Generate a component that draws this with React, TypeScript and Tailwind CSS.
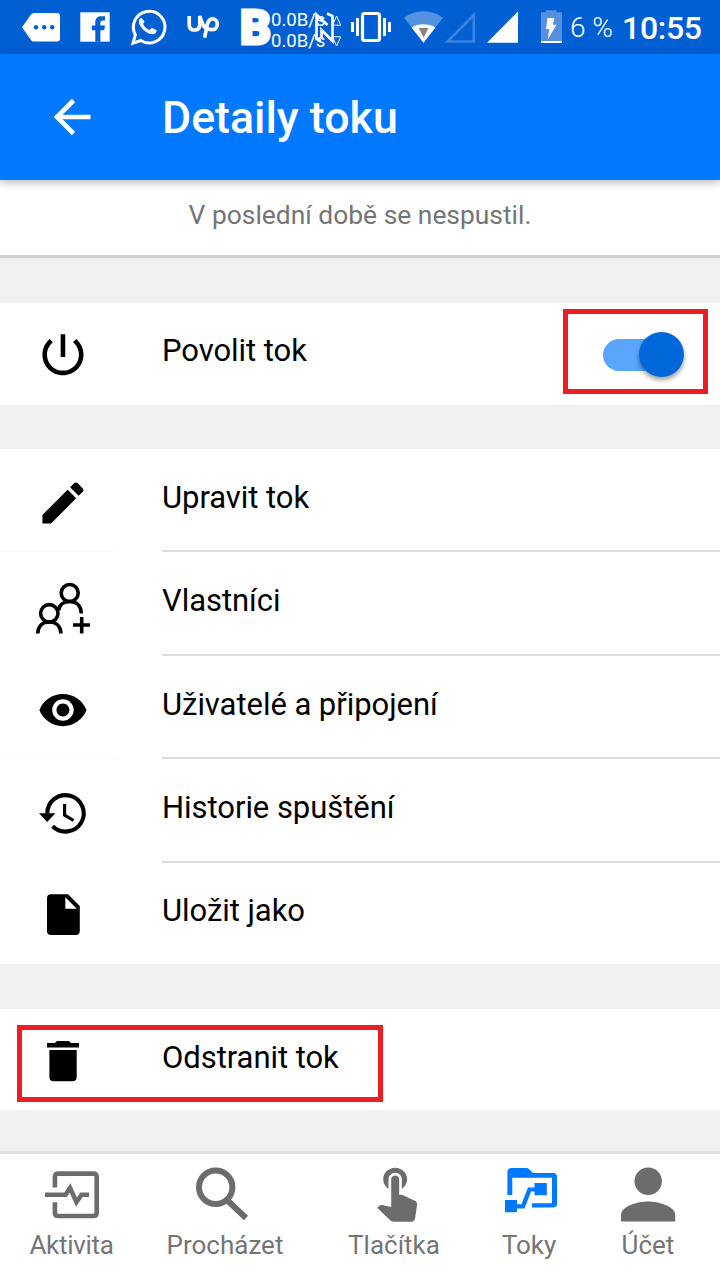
import type { ReactNode } from 'react';

const font = "font-['Roboto','Noto_Sans',sans-serif]";

function StatusIcon({ x, w, children }: { x: number; w: number; children: ReactNode }) {
  return (
    <svg width={w} height={54} viewBox={`${x} 0 ${w} 54`} className="block shrink-0 overflow-visible" fill="#fff">
      {children}
    </svg>
  );
}

function StatusBar() {
  return (
    <div className="flex h-[54px] shrink-0 items-start bg-[#005fd3] text-white">
      <StatusIcon x={0} w={70}>
        <path d="M22 27.2 31 14.5Q32 13 34 13H57Q60 13 60 16V38.5Q60 41.5 57 41.5H34Q32 41.5 31 40Z" />
        <circle cx="36" cy="27.2" r="2.2" fill="#005fd3" />
        <circle cx="44.2" cy="27.2" r="2.2" fill="#005fd3" />
        <circle cx="52.2" cy="27.2" r="2.2" fill="#005fd3" />
      </StatusIcon>
      <StatusIcon x={70} w={50}>
        <path d="M80.3 12.3H109.7V41.7H80.3Z" />
        <path d="M95.3 41.8V30.2H91.8V25.6H95.3V22C95.3 18 97.8 16.2 101.4 16.2H105V20.6H103C101.2 20.6 100.4 21.4 100.4 23V25.6H105L104.3 30.2H100.4V41.8Z" fill="#005fd3" />
      </StatusIcon>
      <StatusIcon x={120} w={57}>
        <path d="M134.2 43.6 136.6 35.2A15.8 15.8 0 1 1 142 40.9Z" transform="translate(-1.2 -.4)" fill="none" stroke="#fff" strokeWidth="3" strokeLinejoin="miter" />
        <path transform="translate(-1.4 0)" d="M143.3 18.3C142.5 17.6 141.6 18 140.9 19.2C139 22 141.5 26.5 145 30C148.8 33.4 153.3 35.4 156 33.8C157.8 32.8 158.3 31.3 158 30.3L153.3 27.8L151 30.1C148 29 145.8 26.7 144.5 24L146 21.8Z" />
      </StatusIcon>
      <StatusIcon x={177} w={53}>
        <path d="M189.2 16V24.5Q189.2 30 194.4 30Q199.8 30 199.8 24.5V16C201.2 21.5 203 25.8 206 28.5M204.6 37.6 207.2 25Q208.4 18.8 212.6 18.8A4.7 5.4 0 0 1 212.6 29.6Q209.5 29.6 206 28.5" fill="none" stroke="#fff" strokeWidth="3.7" />
      </StatusIcon>
      <div className="flex h-[54px] w-[114px] shrink-0">
        <span className="ml-[10px] w-[31px] text-[48px] font-black leading-[56px] [-webkit-text-stroke:3px_#fff]">B</span>
        <span className="w-[54px] whitespace-nowrap pt-[10px] text-[18.5px] leading-[21px]">0.0B/s<br />0.0B/s</span>
        <span className="w-[19px]">
          <svg width="40" height="54" viewBox="313 0 40 54" className="-ml-[12px] block overflow-visible" fill="none" stroke="#fff">
            <path transform="translate(1.5 0)" d="M319.5 40.5 315 39V14.5L326 25M325.5 13.5 331 16V41L320 30V38" strokeWidth="2.6" />
            <path d="M332.5 25.2 336.6 16 340.7 25.2ZM332.5 36.8 336.6 46 340.7 36.8Z" strokeWidth="1" />
          </svg>
        </span>
      </div>
      <StatusIcon x={344} w={54}>
        <rect x="362.5" y="13.5" width="17" height="27" rx="2" fill="none" stroke="#fff" strokeWidth="3.2" />
        <path d="M351 22H354V32H351ZM356 18H359V36H356ZM383 18H386V36H383ZM388 22H391V32H388Z" />
      </StatusIcon>
      <StatusIcon x={398} w={46}>
        <path d="M404 17.8Q412 11.2 423.5 11.2T443 17.8L423.5 42.7Z" opacity=".32" />
        <path d="M411.6 27.5Q417 24.2 423.5 24.2T435.4 27.5L423.5 42.7Z" />
        <path d="M418.8 28H428.4L423.6 37.8Z" fill="#858585" />
      </StatusIcon>
      <StatusIcon x={444} w={40}>
        <path d="M447.5 41.5H473.8V15Z" fill="none" stroke="#3a83de" strokeWidth="2.6" />
      </StatusIcon>
      <StatusIcon x={484} w={45}>
        <path d="M487 42.8H518V11.5Z" />
      </StatusIcon>
      <StatusIcon x={529} w={40}>
        <path d="M546 10.2H556.5V12.3H562V41H541V12.3H546Z" fill="#568fe0" />
        <path d="M541 41H562V43H541ZM547.5 18H554.5L552.8 24.7H556.5L547.8 39.5L549.2 29H546Z" />
      </StatusIcon>
      <span className="w-[53px] shrink-0 whitespace-nowrap pl-[1px] text-[28px] font-light leading-[56px]">6 %</span>
      <span className="shrink-0 whitespace-nowrap text-[32px] font-medium leading-[56px] tracking-[-0.3px]">10:55</span>
    </div>
  );
}

function RowIcon({ y, h, children }: { y: number; h: number; children: ReactNode }) {
  return (
    <svg width={162} height={h} viewBox={`0 ${y} 162 ${h}`} className="block shrink-0" fill="#000">
      {children}
    </svg>
  );
}

function Row({ y, h, label, icon, divider, faint, pad = 'pt-[31px]' }: { y: number; h: number; label: string; icon: ReactNode; divider?: boolean; faint?: boolean; pad?: string }) {
  return (
    <div className="flex bg-white" style={{ height: h }}>
      <RowIcon y={y} h={h}>
        {icon}
        {faint && <path d={`M0 ${y + h - 0.5}H117`} stroke="#fafafa" />}
      </RowIcon>
      <div className={divider ? 'flex-1 border-b-2 border-[#dcdcdc]' : 'flex-1'}>
        <div className={`whitespace-nowrap text-[31px] leading-[36px] tracking-[-0.05px] text-black ${pad}`}>{label}</div>
      </div>
    </div>
  );
}

function Tab({ className, label, x, w, children }: { className: string; label: string; x: number; w: number; children: ReactNode }) {
  return (
    <div className={`flex shrink-0 flex-col items-center ${className}`}>
      <svg width={w} height={72} viewBox={`${x} 1154 ${w} 72`} className="block" fill="#6c6c6c">
        {children}
      </svg>
      <span className="whitespace-nowrap text-[26px] leading-[38px] text-[#757575]">{label}</span>
    </div>
  );
}

export default function App() {
  return (
    <div className={`relative flex h-[1280px] w-[720px] flex-col overflow-hidden bg-[#f0f0f0] ${font}`}>
      <StatusBar />
      <header className="z-10 flex h-[126px] shrink-0 items-center bg-[#0078ff] text-white shadow-[0_2px_9px_rgba(0,0,0,0.3)]">
        <svg width="162" height="126" viewBox="0 54 162 126" fill="none" stroke="#fff" strokeWidth="4.6">
          <path d="M90.5 117H57M73.5 100.5 57 117 73.5 133.5" />
        </svg>
        <h1 className="pt-[2px] text-[44.7px] font-medium leading-[60px]">Detaily toku</h1>
      </header>
      <div className="h-[78px] shrink-0 border-b-[3px] border-[#cfcfd2] bg-white pt-[18px] text-center text-[26.4px] leading-[34px] text-[#757575]">
        V poslední době se nespustil.
      </div>
      <div className="h-[45px] shrink-0" />
      <div className="relative shrink-0">
        <Row y={303} h={102} label="Povolit tok" pad="pt-[30px]" icon={
          <path transform="translate(35.6 327.3) scale(2.28)" d="M13 3h-2v10h2V3zm4.83 2.17-1.42 1.42C17.99 7.86 19 9.81 19 12c0 3.87-3.13 7-7 7s-7-3.13-7-7c0-2.19 1.01-4.14 2.58-5.42L6.17 5.17C4.23 6.82 3 9.26 3 12c0 4.97 4.03 9 9 9s9-4.03 9-9c0-2.74-1.23-5.18-3.17-6.83z" />
        } />
        <div className="absolute left-[603px] top-[36px] h-[32px] w-[78px] rounded-full bg-[#5aa6ff]" />
        <div className="absolute left-[639px] top-[29px] size-[45px] rounded-full bg-[#0067db] shadow-[0_3px_5px_rgba(0,0,0,0.4)]" />
        <div className="absolute left-[563px] top-[6px] h-[85px] w-[145px] border-[5px] border-[#ee1c25]" />
      </div>
      <div className="h-[44px] shrink-0" />
      <div className="shrink-0">
        <Row y={449} h={103} label="Upravit tok" divider faint icon={
          <path transform="translate(35.6 475.6) scale(2.28)" d="M3 17.25V21h3.75L17.81 9.94l-3.75-3.75L3 17.25zM20.71 7.04c.39-.39.39-1.02 0-1.41l-2.34-2.34c-.39-.39-1.02-.39-1.41 0l-1.83 1.83 3.75 3.75 1.83-1.83z" />
        } />
        <Row y={552} h={104} label="Vlastníci" divider icon={
          <g fill="none" stroke="#000" strokeWidth="3.6">
            <circle cx="69.7" cy="593" r="8.5" />
            <circle cx="49.3" cy="613.3" r="8.7" />
            <path d="M37.7 633.5C38 625.5 43 622 49.3 622S60.6 625.5 61 633.5M58.5 610.5C59.5 604 64 601.5 69.7 601.5C76.5 601.5 81 605.5 81.3 613.5M73 625H90M81.7 617V633.5" />
          </g>
        } />
        <Row y={656} h={103} label="Uživatelé a připojení" divider faint icon={
          <path transform="translate(37.2 684.3) scale(2.145)" d="M12 4.5C7 4.5 2.73 7.61 1 12c1.73 4.39 6 7.5 11 7.5s9.27-3.11 11-7.5c-1.73-4.39-6-7.5-11-7.5zM12 17c-2.76 0-5-2.24-5-5s2.24-5 5-5 5 2.24 5 5-2.24 5-5 5zm0-8c-1.66 0-3 1.34-3 3s1.34 3 3 3 3-1.34 3-3-1.34-3-3-3z" />
        } />
        <Row y={759} h={104} label="Historie spuštění" divider icon={
          <g fill="none" stroke="#000" strokeWidth="4.1">
            <path d="M47.3 813.5A18.2 18.2 0 1 1 52.6 826.2" />
            <path d="M64.6 804V815.2L73.5 820.5" strokeWidth="3.2" />
            <path d="M39 813.2H55.4L47.2 822Z" fill="#000" stroke="none" />
          </g>
        } />
        <Row y={863} h={101} label="Uložit jako" pad="pt-[30px]" icon={
          <path fillRule="evenodd" d="M51 894.3H68L79.8 906V931Q79.8 935 75.8 935H51Q47 935 47 931V898.3Q47 894.3 51 894.3ZM65.3 897.2V908.7H76.8Z" />
        } />
      </div>
      <div className="h-[45px] shrink-0" />
      <div className="relative shrink-0">
        <Row y={1009} h={101} label="Odstranit tok" icon={
          <path d="M47 1043H54.8L57 1041H69L71 1043H79V1047.5H47ZM49.4 1050H76.7V1077Q76.7 1081.2 72.5 1081.2H53.6Q49.4 1081.2 49.4 1077Z" />
        } />
        <div className="absolute left-[17px] top-[16px] h-[77px] w-[366px] border-[5px] border-[#ee1c25]" />
      </div>
      <div className="h-[41px] shrink-0" />
      <nav className="flex h-[129px] shrink-0 border-t-[3px] border-[#e0e0e0] bg-white">
        <Tab className="w-[143px] tracking-[-0.3px]" label="Aktivita" x={36} w={71}>
          <path d="M54.9 1187.5V1177Q54.9 1173.6 58.3 1173.6H93.3Q96.7 1173.6 96.7 1177V1213Q96.7 1216 93.3 1216H58.3Q54.9 1216 54.9 1213V1202.3M45 1194.7H65.5L70 1188 76.5 1202 81.5 1194.7H89" fill="none" stroke="#6c6c6c" strokeWidth="4.6" />
        </Tab>
        <Tab className="w-[164px]" label="Procházet" x={190} w={70}>
          <g fill="none" stroke="#6c6c6c" strokeWidth="6">
            <circle cx="215.7" cy="1187.3" r="16.7" />
            <path d="M228.5 1201.5 246 1218" />
          </g>
        </Tab>
        <Tab className="w-[174px]" label="Tlačítka" x={359} w={70}>
          <path transform="translate(364.6 1160) scale(2.66 2.57)" d="M9 11.24V7.5C9 6.12 10.12 5 11.5 5S14 6.12 14 7.5v3.74c1.21-.81 2-2.18 2-3.74C16 5.01 13.99 3 11.5 3S7 5.01 7 7.5c0 1.56.79 2.93 2 3.74zm9.84 4.63-4.54-2.26c-.17-.07-.35-.11-.54-.11H13v-6c0-.83-.67-1.5-1.5-1.5S10 6.67 10 7.5v10.74l-3.43-.72c-.08-.01-.15-.03-.24-.03-.31 0-.59.13-.79.33l-.79.8 4.94 4.94c.27.27.65.44 1.06.44h6.79c.75 0 1.33-.55 1.44-1.28l.75-5.27c.01-.07.02-.14.02-.2 0-.62-.38-1.16-.91-1.38z" />
        </Tab>
        <Tab className="w-[96px]" label="Toky" x={494} w={70}>
          <g fill="#0078ff">
            <path d="M507.4 1195V1172Q507.4 1168 511.4 1168H526.5Q528 1168 529.2 1169.2L533 1173H553Q557 1173 557 1177V1203.5Q557 1207.5 553 1207.5H532V1203.2H552V1177.8H512.3V1195Z" />
            <path d="M534.5 1183H546.8V1195.2H534.5V1191.5H531L524.5 1208.4H517V1212.2H505V1200H517V1204.2H521.5L528 1187.5H534.5Z" />
          </g>
        </Tab>
        <Tab className="w-[142px]" label="Účet" x={613} w={70}>
          <circle cx="648.2" cy="1181.3" r="13.7" />
          <path d="M621 1221.6V1215C621 1206 638 1201.5 648 1201.5S675.2 1206 675.2 1215V1221.6Z" />
        </Tab>
      </nav>
    </div>
  );
}
